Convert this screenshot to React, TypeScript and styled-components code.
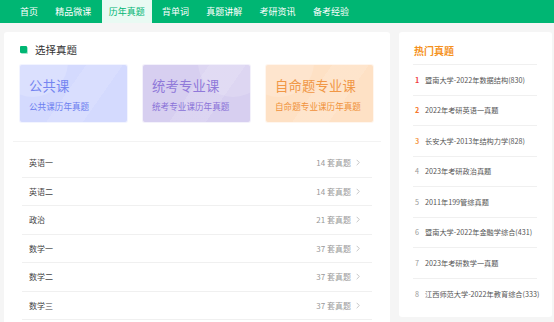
import React from "react";
import styled, { createGlobalStyle } from "styled-components";

const green = "#00b673";

const GlobalStyle = createGlobalStyle`
  html, body {
    margin: 0;
    padding: 0;
    background: #f5f5f5;
    font-family: "Noto Sans CJK SC", "Noto Sans", sans-serif;
    overflow: hidden;
  }
`;

const navItems = ["首页", "精品微课", "历年真题", "背单词", "真题讲解", "考研资讯", "备考经验"];

const courseCards = [
    { title: "公共课", sub: "公共课历年真题", bg: "#d4dafe", fg: "#6d7ef0", deco: "left" },
    { title: "统考专业课", sub: "统考专业课历年真题", bg: "#d7cff0", fg: "#8a72d8", deco: "right" },
    { title: "自命题专业课", sub: "自命题专业课历年真题", bg: "#fee1c5", fg: "#f0913a", deco: "left" },
];

const subjects = [
    { name: "英语一", count: 14 },
    { name: "英语二", count: 14 },
    { name: "政治", count: 21 },
    { name: "数学一", count: 37 },
    { name: "数学二", count: 37 },
    { name: "数学三", count: 37 },
];

const hotList = [
    "暨南大学-2022年数据结构(830)",
    "2022年考研英语一真题",
    "长安大学-2013年结构力学(828)",
    "2023年考研政治真题",
    "2011年199管综真题",
    "暨南大学-2022年金融学综合(431)",
    "2023年考研数学一真题",
    "江西师范大学-2022年教育综合(333)",
];

const rankColor = (i: number) => {
    if (i === 0) return "#f03d3d";
    if (i === 1) return "#f6772b";
    if (i === 2) return "#f59a4c";
    return "#999";
};

const App = () => {
    return (
        <>
            <GlobalStyle />
            <Nav>
                {navItems.map((item) => (
                    <NavItem key={item} $active={item === "历年真题"}>
                        {item}
                    </NavItem>
                ))}
            </Nav>
            <Main>
                <LeftPanel>
                    <SectionTitle>
                        <Square />
                        选择真题
                    </SectionTitle>
                    <Cards>
                        {courseCards.map((card) => (
                            <Card key={card.title} $bg={card.bg} $fg={card.fg} $deco={card.deco}>
                                <CardTitle>{card.title}</CardTitle>
                                <CardSub>{card.sub}</CardSub>
                            </Card>
                        ))}
                    </Cards>
                    <Divider />
                    <SubjectList>
                        {subjects.map((s) => (
                            <SubjectRow key={s.name}>
                                <span>{s.name}</span>
                                <Count>
                                    {s.count} 套真题
                                    <Chevron viewBox="0 0 6 10">
                                        <path d="M1 1l4 4-4 4" fill="none" stroke="#aaa" strokeWidth="1" />
                                    </Chevron>
                                </Count>
                            </SubjectRow>
                        ))}
                    </SubjectList>
                </LeftPanel>
                <HotPanel>
                    <HotTitle>热门真题</HotTitle>
                    <ul>
                        {hotList.map((item, i) => (
                            <HotItem key={item}>
                                <Rank $color={rankColor(i)}>{i + 1}</Rank>
                                {item}
                            </HotItem>
                        ))}
                    </ul>
                </HotPanel>
            </Main>
        </>
    );
};

const Nav = styled.div`
    height: 23px;
    background: ${green};
    display: flex;
    align-items: stretch;
    padding-left: 13px;
    gap: 3.3px;
`;

const NavItem = styled.div<{ $active?: boolean }>`
    display: flex;
    align-items: center;
    padding: 0 7px;
    font-size: 9px;
    color: ${(p) => (p.$active ? green : "#fff")};
    background: ${(p) => (p.$active ? "#e9faf3" : "transparent")};
`;

const Main = styled.div`
    display: flex;
    align-items: flex-start;
    gap: 9px;
    padding: 9px 2px 0 4px;
`;

const LeftPanel = styled.div`
    width: 386px;
    flex: none;
    background: #fff;
    border-radius: 3px;
    padding: 8px 15px 20px;
    box-sizing: border-box;
`;

const SectionTitle = styled.div`
    height: 18px;
    display: flex;
    align-items: center;
    font-size: 10.5px;
    color: #333;
    padding-left: 1px;
    margin-bottom: 6px;
`;

const Square = styled.span`
    width: 7px;
    height: 7px;
    background: ${green};
    border-radius: 1px;
    margin-right: 8px;
    box-shadow: 1px 1px 0 rgba(0, 182, 115, 0.35);
`;

const Cards = styled.div`
    display: grid;
    grid-template-columns: repeat(3, 1fr);
    gap: 14px;
    padding-right: 1px;
`;

const Card = styled.div<{ $bg: string; $fg: string; $deco: string }>`
    position: relative;
    overflow: hidden;
    height: 59px;
    box-sizing: border-box;
    padding: 13px 9px 0;
    border-radius: 3px;
    border: 1px solid rgba(255, 255, 255, 0.7);
    background: ${(p) => p.$bg};
    color: ${(p) => p.$fg};
    white-space: nowrap;

    &::before {
        content: "";
        position: absolute;
        width: 70px;
        height: 70px;
        border-radius: 50%;
        top: -38px;
        ${(p) => (p.$deco === "left" ? "left: -22px;" : "right: -18px;")}
        background: rgba(255, 255, 255, 0.16);
    }
    &::after {
        content: "";
        position: absolute;
        inset: 0;
        background: linear-gradient(125deg, rgba(255, 255, 255, 0) 45%, rgba(255, 255, 255, 0.12) 45%, rgba(255, 255, 255, 0.12) 70%, rgba(255, 255, 255, 0) 70%);
    }
`;

const CardTitle = styled.div`
    position: relative;
    z-index: 1;
    font-size: 13.3px;
    line-height: 16px;
    letter-spacing: 0.2px;
    opacity: 0.92;
`;

const CardSub = styled.div`
    position: relative;
    z-index: 1;
    margin-top: 7px;
    font-size: 8.6px;
    line-height: 10px;
`;

const Divider = styled.div`
    height: 1px;
    background: #f3f3f3;
    margin: 18px -6px 7px;
`;

const SubjectList = styled.div`
    padding: 0 3px;
`;

const SubjectRow = styled.div`
    height: 28.5px;
    box-sizing: border-box;
    border-bottom: 1px solid #f0f0f0;
    display: flex;
    align-items: center;
    justify-content: space-between;
    padding: 0 12px 0 7px;
    font-size: 8px;
    color: #444;
`;

const Count = styled.span`
    display: flex;
    align-items: center;
    gap: 5px;
    color: #999;
`;

const Chevron = styled.svg`
    width: 4px;
    height: 7px;
`;

const HotPanel = styled.div`
    width: 153px;
    flex: none;
    background: #fff;
    border-radius: 3px;
    padding: 0 15px 8px 14px;
    box-sizing: border-box;

    ul {
        margin: 0;
        padding: 0;
        list-style: none;
    }
`;

const HotTitle = styled.div`
    padding: 13px 0 7px 1px;
    line-height: 12px;
    font-size: 10px;
    font-weight: bold;
    color: #f5921e;
    border-bottom: 1px solid #f0f0f0;
`;

const HotItem = styled.li`
    height: 30.5px;
    box-sizing: border-box;
    display: flex;
    align-items: center;
    font-size: 7.2px;
    color: #555;
    white-space: nowrap;
    border-bottom: 1px solid #f0f0f0;
    &:last-child {
        border-bottom: none;
    }
`;

const Rank = styled.span<{ $color: string }>`
    flex: none;
    width: 10px;
    padding-left: 2px;
    color: ${(p) => p.$color};
    font-weight: ${(p) => (p.$color === "#999" ? "normal" : "bold")};
`;

export default App;
